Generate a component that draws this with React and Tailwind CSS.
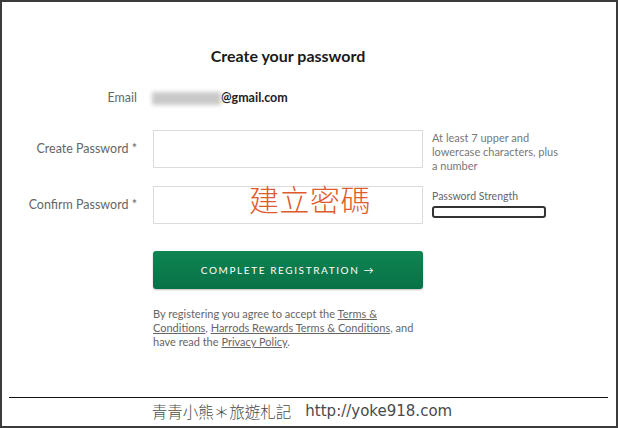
import React from 'react';

const sans = { fontFamily: 'Lato, "Noto Sans", sans-serif' };

function FieldRow({ label, children, aside, className = '' }) {
  return (
    <div className={`flex items-start h-[38px] ${className}`}>
      <div className="w-[135px] h-[38px] flex items-center justify-end text-[12.5px] text-[#666]">
        {label}
      </div>
      <div className="ml-4 w-[270px] relative">{children}</div>
      <div className="ml-[9px] w-[128px]">{aside}</div>
    </div>
  );
}

export default function App() {
  return (
    <div
      className="w-[618px] h-[428px] border-2 border-[#3b3b3b] bg-white flex flex-col overflow-hidden"
      style={sans}
    >
      {/* Form */}
      <div className="flex flex-col pt-[44px]">
        <h1 className="text-[16px] leading-[20px] font-bold text-[#1a1a1a] text-center pr-[42px]">
          Create your password
        </h1>

        <div className="flex items-center mt-[24px] h-[16px]">
          <div className="w-[135px] text-right text-[12.5px] text-[#666]">Email</div>
          <div className="ml-[15px] flex items-center">
            <div className="w-[69px] h-[13px] bg-[#c9c9c9] blur-[2px]" />
            <span className="text-[12.5px] font-bold text-[#222]">@gmail.com</span>
          </div>
        </div>

        <FieldRow
          className="mt-[24px]"
          label="Create Password *"
          aside={
            <p className="mt-[1px] text-[11px] leading-[14px] text-[#777]">
              At least 7 upper and lowercase characters, plus a number
            </p>
          }
        >
          <div className="h-[38px] border border-[#dcdcdc] bg-white" />
        </FieldRow>

        <FieldRow
          className="mt-[18px]"
          label="Confirm Password *"
          aside={
            <div className="mt-[3px]">
              <p className="text-[10.5px] leading-[14px] text-[#666]">Password Strength</p>
              <div className="mt-[3px] w-[114px] h-[12px] border-2 border-[#333] rounded-[3px]" />
            </div>
          }
        >
          <div className="h-[38px] border border-[#dcdcdc] bg-white" />
          <span
            className="absolute left-[96px] top-[-8px] text-[30px] leading-[40px] tracking-[0.5px] text-[#df5b2d] font-light"
            style={{ fontFamily: '"Noto Sans CJK TC", sans-serif' }}
          >
            建立密碼
          </span>
        </FieldRow>

        <div className="flex mt-[27px]">
          <button className="ml-[151px] w-[270px] h-[38px] rounded-[3px] bg-gradient-to-b from-[#0f8552] to-[#087146] shadow-[0_1px_2px_rgba(0,0,0,0.25)] text-white text-[10px] tracking-[1.6px] flex items-center justify-center">
            COMPLETE REGISTRATION →
          </button>
        </div>

        <p className="ml-[151px] mt-[18px] w-[262px] text-[11px] leading-[14px] text-[#666]">
          By registering you agree to accept the <a className="underline">Terms &amp; Conditions</a>,{' '}
          <a className="underline">Harrods Rewards Terms &amp; Conditions</a>, and have read the{' '}
          <a className="underline">Privacy Policy</a>.
        </p>
      </div>

      <div className="flex-1" />

      {/* Footer */}
      <div className="ml-[7px] mr-[8px] border-t-[1.5px] border-[#111]" />
      <div className="h-[28px] flex items-start justify-center gap-[14px] pt-[2px] pr-[14px] text-[#4a4a4a]">
        <span
          className="text-[15.5px] leading-[22px] font-light"
          style={{ fontFamily: '"Noto Sans CJK TC", sans-serif' }}
        >
          青青小熊＊旅遊札記
        </span>
        <span
          className="text-[15px] leading-[22px]"
          style={{ fontFamily: '"DejaVu Sans", sans-serif' }}
        >
          http://yoke918.com
        </span>
      </div>
    </div>
  );
}
